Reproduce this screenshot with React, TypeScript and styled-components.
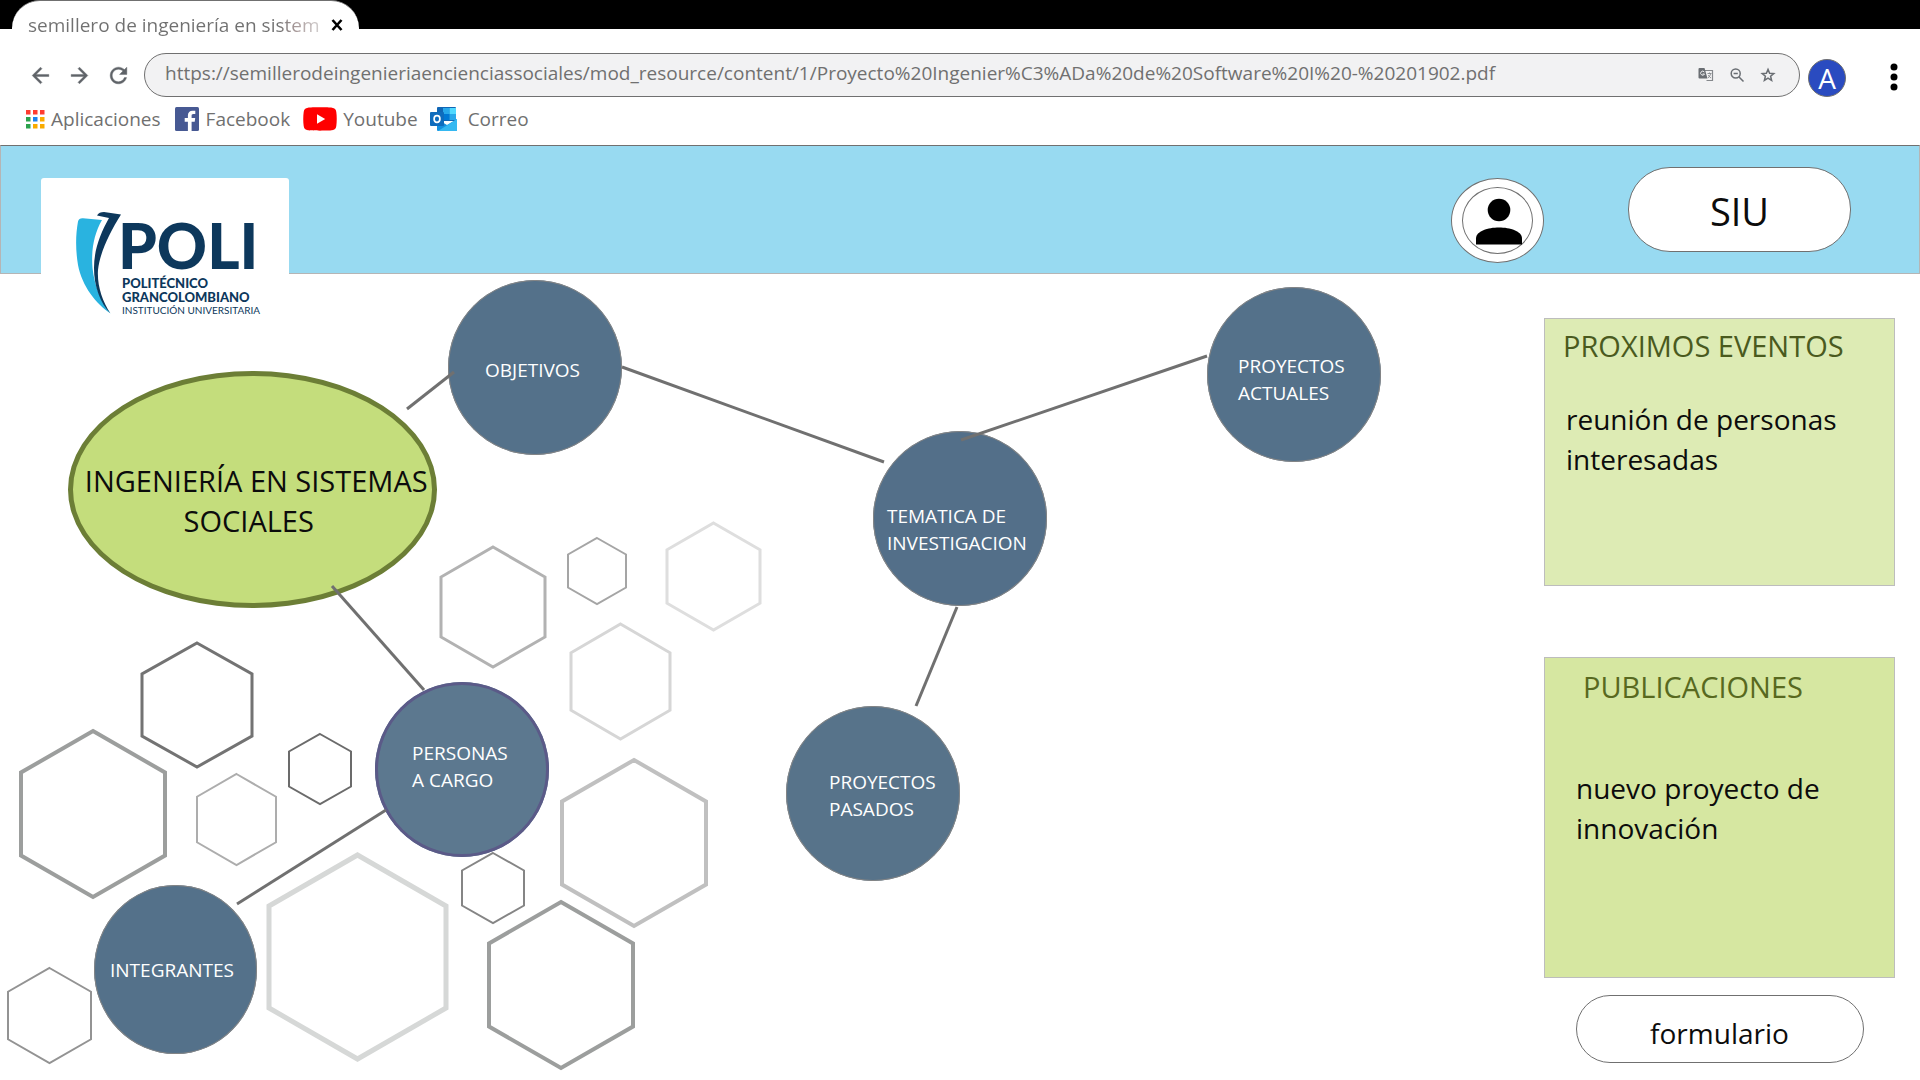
import React from "react";
import styled, { createGlobalStyle } from "styled-components";

const GlobalStyle = createGlobalStyle`
  *, *::before, *::after { box-sizing: border-box; }
  body { margin: 0; background: #fff; }
  a { color: inherit; text-decoration: none; }
  button { font: inherit; color: inherit; cursor: pointer; }
  h1, h2, p { margin: 0; font-weight: 400; }
`;

const Page = styled.div`
  display: flex;
  flex-direction: column;
  min-height: 100vh;
  font-family: "Open Sans", "Noto Sans", sans-serif;
  color: #0c0c0c;
`;

/* ---------- browser chrome ---------- */

const TabStrip = styled.div`
  height: 29px;
  padding-left: 12px;
  background: #000;
`;

const Tab = styled.div`
  display: flex;
  align-items: center;
  gap: 12px;
  width: 347px;
  height: 48px;
  padding: 0 16px;
  border-top: 1px solid #707070;
  border-radius: 28px 28px 0 0;
  background: #fff;
`;

const TabTitle = styled.span`
  flex: 1;
  overflow: hidden;
  white-space: nowrap;
  font-size: 19px;
  line-height: 28px;
  color: transparent;
  background: linear-gradient(90deg, #707070 86%, #a89a9a 92%, #d0cccc 100%);
  background-clip: text;
`;

const IconButton = styled.button`
  display: flex;
  padding: 0;
  border: 0;
  background: none;
`;

const Toolbar = styled.div`
  display: flex;
  align-items: center;
  height: 44px;
  margin-top: 24px;
  padding: 0 20px 0 28px;
`;

const NavButtons = styled.div`
  display: flex;
  gap: 14px;
  padding-right: 13px;
  color: #5f6368;
`;

const AddressBar = styled.div`
  display: flex;
  flex: 1;
  align-items: center;
  gap: 15px;
  height: 44px;
  padding: 0 23px 0 20px;
  border: 1px solid #707070;
  border-radius: 22px;
  background: #f2f2f3;
  color: #5f6368;
`;

const AddressInput = styled.input`
  flex: 1;
  min-width: 0;
  height: 36px;
  padding: 0 0 4px;
  border: 0;
  outline: 0;
  background: none;
  font: 19px/28px "Open Sans", "Noto Sans", sans-serif;
  color: #707070;
`;

const Avatar = styled.button`
  width: 38px;
  height: 38px;
  margin: 6px 42px 0 8px;
  padding: 0;
  border: 1px solid #707070;
  border-radius: 50%;
  background: #2a4bc0;
  color: #fff;
  font-size: 28px;
  line-height: 32px;
`;

const Bookmarks = styled.nav`
  display: flex;
  align-items: center;
  height: 48px;
  padding: 0 26px 4px;
  font-size: 19px;
  line-height: 28px;
  color: #707070;
`;

const Bookmark = styled.a<{ $gap: number; $after: number }>`
  display: flex;
  align-items: center;
  gap: ${(p) => p.$gap}px;
  margin-right: ${(p) => p.$after}px;
`;

/* ---------- site ---------- */

const SiteHeader = styled.header`
  display: flex;
  align-items: flex-start;
  height: 129px;
  padding: 0 68px 0 40px;
  border: 1px solid #b5b5b5;
  border-top-color: #707070;
  background: #98daf1;
`;

const LogoCard = styled.a`
  z-index: 1;
  display: flex;
  width: 248px;
  height: 144px;
  margin: 32px auto 0 0;
  padding: 34px 0 0 35px;
  border-radius: 3px;
  background: #fff;
  color: #0d385c;
  font-family: Lato, "Open Sans", sans-serif;
`;

const LogoWords = styled.span`
  display: flex;
  flex-direction: column;
`;

const LogoName = styled.span`
  height: 64px;
  margin-left: -4px;
  font-size: 62px;
  font-weight: 900;
  line-height: 66px;
`;

const LogoLine = styled.span`
  font-size: 13px;
  font-weight: 900;
  line-height: 14px;
  white-space: nowrap;
`;

const LogoSmall = styled.span`
  font-size: 10px;
  line-height: 12px;
  white-space: nowrap;
`;

const ProfileButton = styled.button`
  display: flex;
  align-items: center;
  justify-content: center;
  width: 93px;
  height: 85px;
  margin: 32px 84px 0 0;
  padding: 0;
  border: 1px solid #707070;
  border-radius: 50%;
  background: #fff;
`;

const ProfileRing = styled.span`
  display: flex;
  align-items: center;
  justify-content: center;
  width: 71px;
  height: 67px;
  border: 1px solid #707070;
  border-radius: 50%;
`;

const Pill = styled.a<{ $width: number; $height: number; $size: number; $drop: number }>`
  display: flex;
  align-items: center;
  justify-content: center;
  width: ${(p) => p.$width}px;
  height: ${(p) => p.$height}px;
  padding-top: ${(p) => p.$drop}px;
  border: 1px solid #707070;
  border-radius: 42px;
  background: #fff;
  font-size: ${(p) => p.$size}px;
`;

const HeaderPillSlot = styled.div`
  padding-top: 21px;
`;

const Main = styled.main`
  display: flex;
  flex: 1;
`;

const MapCanvas = styled.section`
  position: relative;
  flex: 1;
  min-height: 806px;
`;

const MapDrawing = styled.svg`
  position: absolute;
  top: 0;
  left: 0;
  overflow: visible;
  pointer-events: none;
`;

type NodeBox = { $x: number; $y: number; $w: number; $h: number };

const Topic = styled.a<NodeBox & { $fill: string; $pad: number; $top: number; $ring?: boolean }>`
  position: absolute;
  left: ${(p) => p.$x}px;
  top: ${(p) => p.$y}px;
  width: ${(p) => p.$w}px;
  height: ${(p) => p.$h}px;
  padding: ${(p) => p.$top}px 0 0 ${(p) => p.$pad}px;
  border-radius: 50%;
  box-shadow: inset 0 0 0 ${(p) => (p.$ring ? "3px #5b5a88" : "1px #858585")};
  background: ${(p) => p.$fill};
  color: #fff;
  font-size: 19px;
  line-height: 27px;
  white-space: pre-line;
`;

const Centre = styled.h1<NodeBox>`
  position: absolute;
  left: ${(p) => p.$x}px;
  top: ${(p) => p.$y}px;
  display: flex;
  align-items: center;
  justify-content: center;
  width: ${(p) => p.$w}px;
  height: ${(p) => p.$h}px;
  padding-top: 22px;
  border: 5px solid #6c7e36;
  border-radius: 50%;
  background: #c4dd7c;
  font-size: 29px;
  line-height: 40px;
  text-align: center;
  white-space: pre;
`;

const Sidebar = styled.aside`
  display: flex;
  flex-direction: column;
  align-items: center;
  width: 351px;
  margin: 44px 25px 0 0;
`;

const Panel = styled.section<{ $height: number; $fill: string; $after: number }>`
  width: 100%;
  height: ${(p) => p.$height}px;
  margin-bottom: ${(p) => p.$after}px;
  border: 1px solid #bdbdbd;
  background: ${(p) => p.$fill};
  line-height: 40px;
`;

const PanelTitle = styled.h2<{ $pad: number; $top: number; $tone: string }>`
  padding: ${(p) => p.$top}px 0 0 ${(p) => p.$pad}px;
  font-size: 29px;
  color: ${(p) => p.$tone};
`;

const PanelText = styled.p<{ $pad: number; $top: number }>`
  padding: ${(p) => p.$top}px 32px 0 ${(p) => p.$pad}px;
  font-size: 28px;
`;

/* ---------- data ---------- */

const hexagons = [
  { l: 21, r: 165, t: 731, b: 897, c: "#9c9e9d", s: 4 },
  { l: 142, r: 252, t: 643, b: 767, c: "#737373", s: 3 },
  { l: 197, r: 276, t: 774, b: 865, c: "#adadad", s: 2 },
  { l: 289, r: 351, t: 734, b: 804, c: "#6b6b6b", s: 2 },
  { l: 441, r: 545, t: 547, b: 667, c: "#b2b2b2", s: 3 },
  { l: 568, r: 626, t: 538, b: 604, c: "#a5a5a5", s: 2 },
  { l: 667, r: 760, t: 523, b: 630, c: "#dedede", s: 3 },
  { l: 571, r: 670, t: 624, b: 739, c: "#d6d6d6", s: 3 },
  { l: 562, r: 706, t: 760, b: 926, c: "#c0c0c0", s: 4 },
  { l: 489, r: 633, t: 902, b: 1068, c: "#9c9e9d", s: 4 },
  { l: 462, r: 524, t: 853, b: 923, c: "#858585", s: 2 },
  { l: 269, r: 446, t: 855, b: 1059, c: "#d6d8d7", s: 5 },
  { l: 8, r: 91, t: 968, b: 1063, c: "#939393", s: 2 },
];

const links = [
  [407, 409, 454, 372],
  [622, 367, 884, 462],
  [961, 440, 1207, 356],
  [957, 607, 916, 706],
  [332, 586, 424, 690],
  [237, 904, 386, 810],
];

const topics = [
  { label: "OBJETIVOS", x: 448, y: 6, w: 174, h: 175, fill: "#54718a", pad: 37, top: 77 },
  { label: "PROYECTOS\nACTUALES", x: 1207, y: 13, w: 174, h: 175, fill: "#54718a", pad: 31, top: 66 },
  { label: "TEMATICA DE\nINVESTIGACION", x: 873, y: 157, w: 174, h: 175, fill: "#536f89", pad: 14, top: 72 },
  { label: "PROYECTOS\nPASADOS", x: 786, y: 432, w: 174, h: 175, fill: "#57738a", pad: 43, top: 63 },
  { label: "PERSONAS\nA CARGO", x: 375, y: 408, w: 174, h: 175, fill: "#5c788f", pad: 37, top: 58, ring: true },
  { label: "INTEGRANTES", x: 94, y: 611, w: 163, h: 169, fill: "#54718a", pad: 16, top: 72 },
];

const hexPoints = (l: number, r: number, t: number, b: number) => {
  const q = (b - t) / 4;
  const m = (l + r) / 2;
  return `${m},${t} ${r},${t + q} ${r},${b - q} ${m},${b} ${l},${b - q} ${l},${t + q}`;
};

/* ---------- drawings ---------- */

const NavIcon = ({ d }: { d: string }) => (
  <svg width="25" height="25" viewBox="0 0 24 24" fill="currentColor" stroke="currentColor" strokeWidth=".4" aria-hidden="true">
    <path d={d} />
  </svg>
);

const AppsIcon = () => (
  <svg width="19" height="19" viewBox="0 0 19 19" aria-hidden="true">
    {["#ff3b30", "#ff3b30", "#ff3b30", "#2ba24c", "#1a82f0", "#f9ab00", "#2ba24c", "#f9ab00", "#f9ab00"].map((c, i) => (
      <rect key={i} x={(i % 3) * 7} y={Math.floor(i / 3) * 7} width="4.5" height="4.5" fill={c} />
    ))}
  </svg>
);

const FacebookIcon = () => (
  <svg width="24" height="24" viewBox="0 0 24 24" aria-hidden="true">
    <rect width="24" height="24" rx="1.5" fill="#475993" />
    <path d="M16.6 24v-9.3h3.1l.5-3.6h-3.6V8.8c0-1 .3-1.8 1.8-1.8h1.9V3.8c-.3 0-1.5-.1-2.8-.1-2.8 0-4.6 1.7-4.6 4.8v2.6H9.7v3.6h3.2V24z" fill="#fff" />
  </svg>
);

const YoutubeIcon = () => (
  <svg width="34" height="24" viewBox="0 0 34 24" aria-hidden="true">
    <path d="M5 .7C8 .2 26 .2 29 .7c2.700.3 4 1.700 4.300 4.300.6 4 .6 10 0 14-.3 2.600-1.600 4-4.300 4.300-3 .5-21 .5-24 0C2.300 23 1 21.600.7 19c-.6-4-.6-10 0-14C1 2.400 2.300 1 5 .7z" fill="#f00" />
    <path d="M14 7.200v9.600l8.200-4.800z" fill="#fff" />
  </svg>
);

const OutlookIcon = () => (
  <svg width="27" height="24" viewBox="0 0 27 24" aria-hidden="true">
    <path d="M8 0h17a1 1 0 0 1 1 1v13H7V1a1 1 0 0 1 1-1z" fill="#1066b5" />
    <path d="M13 1h6.500v6H13z" fill="#28a8ea" />
    <path d="M19.500 1H26v6h-6.500z" fill="#50d9ff" />
    <path d="M13 7h6.500v6H13z" fill="#0078d4" />
    <path d="M19.500 7H26v6h-6.500z" fill="#28a8ea" />
    <path d="M7 12l10 6 10-6v11a1 1 0 0 1-1 1H8a1 1 0 0 1-1-1z" fill="#1490df" />
    <path d="M27 12L8 24h18a1 1 0 0 0 1-1z" fill="#35b8f1" />
    <rect y="5" width="14" height="14" rx="1" fill="#0f6cbd" />
    <ellipse cx="7" cy="12" rx="2.900" ry="3.300" fill="none" stroke="#fff" strokeWidth="1.700" />
  </svg>
);

const LogoMark = () => (
  <svg width="46" height="102" viewBox="0 0 46 102" aria-hidden="true">
    <path d="M2 9.500Q3 6 7 6.300L26 8C18 22 15 38 16.500 56c2 18 8.500 34 18 45.500C20 92 6 74 2 53-.5 38-.5 23 2 9.500z" fill="#29b3e0" />
    <path d="M21 3.500C22 1 25 0 28 0l17 2.500C34 20 24 40 22 58c-1 15 4 31 12.500 43.500C24 91 18 74 18 56 18 38 24 22 33 6z" fill="#0d385c" />
  </svg>
);

export default function App() {
  return (
    <Page>
      <GlobalStyle />
      <TabStrip>
        <Tab>
          <TabTitle>semillero de ingeniería en sistem</TabTitle>
          <IconButton aria-label="Cerrar pestaña">
            <svg width="12" height="12" viewBox="0 0 12 12">
              <path d="M1.500 1l9 10M10.500 1l-9 10" stroke="#000" strokeWidth="2.600" />
            </svg>
          </IconButton>
        </Tab>
      </TabStrip>

      <Toolbar>
        <NavButtons>
          <IconButton aria-label="Atrás">
            <NavIcon d="M20 11H7.830l5.590-5.590L12 4l-8 8 8 8 1.410-1.410L7.830 13H20v-2z" />
          </IconButton>
          <IconButton aria-label="Adelante">
            <NavIcon d="M12 4l-1.410 1.410L16.170 11H4v2h12.170l-5.580 5.590L12 20l8-8z" />
          </IconButton>
          <IconButton aria-label="Recargar">
            <NavIcon d="M17.650 6.350C16.200 4.900 14.210 4 12 4c-4.420 0-7.990 3.580-7.990 8s3.570 8 7.990 8c3.730 0 6.840-2.550 7.730-6h-2.080c-.82 2.330-3.040 4-5.650 4-3.310 0-6-2.690-6-6s2.690-6 6-6c1.660 0 3.140.69 4.220 1.780L13 11h7V4l-2.350 2.350z" />
          </IconButton>
        </NavButtons>
        <AddressBar>
          <AddressInput
            aria-label="Dirección"
            defaultValue="https://semillerodeingenieriaencienciassociales/mod_resource/content/1/Proyecto%20Ingenier%C3%ADa%20de%20Software%20I%20-%20201902.pdf"
          />
          <IconButton aria-label="Traducir">
            <svg width="16" height="16" viewBox="0 0 16 16">
              <path d="M6 3.500h8.500v10H8.500" fill="none" stroke="#85888c" strokeWidth="1.200" />
              <path d="M1.500 1h5l3 10.500h-8a1 1 0 0 1-1-1V2a1 1 0 0 1 1-1z" fill="#6a6e73" />
              <path d="M6.300 5A2 2 0 1 0 6.500 7H4.600" fill="none" stroke="#f2f2f3" strokeWidth="1" />
              <path d="M9.500 6.500h4M11.500 5.500v1M12.700 6.500c-.5 2-1.500 3.500-2.700 4.500M10.300 8c.7 1.400 1.600 2.300 2.700 3" fill="none" stroke="#85888c" strokeWidth=".9" />
            </svg>
          </IconButton>
          <IconButton aria-label="Zoom">
            <svg width="16" height="16" viewBox="0 0 16 16" fill="none" stroke="#6a6e73" strokeWidth="1.500">
              <circle cx="6.700" cy="6.500" r="4.500" />
              <path d="M10 10l4.500 4.500M4.600 6.500h4.200" />
            </svg>
          </IconButton>
          <IconButton aria-label="Favorito">
            <svg width="16" height="16" viewBox="0 0 16 16" fill="none" stroke="#6a6e73" strokeWidth="1.500">
              <path d="M8 2.400l1.600 3.900 4.200.3-3.200 2.700 1 4.100L8 11.200l-3.600 2.200 1-4.100-3.200-2.700 4.200-.3z" />
            </svg>
          </IconButton>
        </AddressBar>
        <Avatar aria-label="Cuenta A">A</Avatar>
        <IconButton aria-label="Menú">
          <svg width="12" height="32" viewBox="0 0 12 32">
            <circle cx="6" cy="8" r="3.500" />
            <circle cx="6" cy="18" r="3.500" />
            <circle cx="6" cy="28" r="3.500" />
          </svg>
        </IconButton>
      </Toolbar>

      <Bookmarks>
        <Bookmark href="#aplicaciones" $gap={6} $after={14}>
          <AppsIcon />
          Aplicaciones
        </Bookmark>
        <Bookmark href="#facebook" $gap={7} $after={13}>
          <FacebookIcon />
          Facebook
        </Bookmark>
        <Bookmark href="#youtube" $gap={6} $after={12}>
          <YoutubeIcon />
          Youtube
        </Bookmark>
        <Bookmark href="#correo" $gap={11} $after={0}>
          <OutlookIcon />
          Correo
        </Bookmark>
      </Bookmarks>

      <SiteHeader>
        <LogoCard href="#inicio">
          <LogoMark />
          <LogoWords>
            <LogoName>POLI</LogoName>
            <LogoLine>POLITÉCNICO</LogoLine>
            <LogoLine>GRANCOLOMBIANO</LogoLine>
            <LogoSmall>INSTITUCIÓN UNIVERSITARIA</LogoSmall>
          </LogoWords>
        </LogoCard>
        <ProfileButton aria-label="Perfil">
          <ProfileRing>
            <svg width="48" height="48" viewBox="0 0 48 48">
              <circle cx="25" cy="13" r="11.300" />
              <path d="M2 47.500v-6C2 34 14 30.500 25 30.500s23 3.500 23 11v6z" />
            </svg>
          </ProfileRing>
        </ProfileButton>
        <HeaderPillSlot>
          <Pill href="#siu" $width={223} $height={85} $size={38} $drop={3}>
            SIU
          </Pill>
        </HeaderPillSlot>
      </SiteHeader>

      <Main>
        <MapCanvas>
          <MapDrawing width="1400" height="806" viewBox="0 274 1400 806" fill="none" aria-hidden="true">
            {hexagons.map((h, i) => (
              <polygon key={i} points={hexPoints(h.l, h.r, h.t, h.b)} stroke={h.c} strokeWidth={h.s} />
            ))}
          </MapDrawing>
          <Centre $x={68} $y={97} $w={369} $h={237}>
            {" INGENIERÍA EN SISTEMAS\nSOCIALES "}
          </Centre>
          {topics.map((t) => (
            <Topic
              key={t.label}
              href="#tema"
              $x={t.x}
              $y={t.y}
              $w={t.w}
              $h={t.h}
              $fill={t.fill}
              $pad={t.pad}
              $top={t.top}
              $ring={t.ring}
            >
              {t.label}
            </Topic>
          ))}
          <MapDrawing width="1400" height="806" viewBox="0 274 1400 806" stroke="#707070" strokeWidth="3" aria-hidden="true">
            {links.map(([x1, y1, x2, y2], i) => (
              <line key={i} x1={x1} y1={y1} x2={x2} y2={y2} />
            ))}
          </MapDrawing>
        </MapCanvas>

        <Sidebar>
          <Panel $height={268} $fill="#ddebb4" $after={71}>
            <PanelTitle $pad={18} $top={7} $tone="#4a5a1e">PROXIMOS EVENTOS</PanelTitle>
            <PanelText $pad={21} $top={33}>reunión de personas interesadas</PanelText>
          </Panel>
          <Panel $height={321} $fill="#d6e7a1" $after={17}>
            <PanelTitle $pad={38} $top={9} $tone="#58691f">PUBLICACIONES</PanelTitle>
            <PanelText $pad={31} $top={61}>nuevo proyecto de innovación</PanelText>
          </Panel>
          <Pill href="#formulario" $width={288} $height={68} $size={28} $drop={8}>
            formulario
          </Pill>
        </Sidebar>
      </Main>
    </Page>
  );
}
